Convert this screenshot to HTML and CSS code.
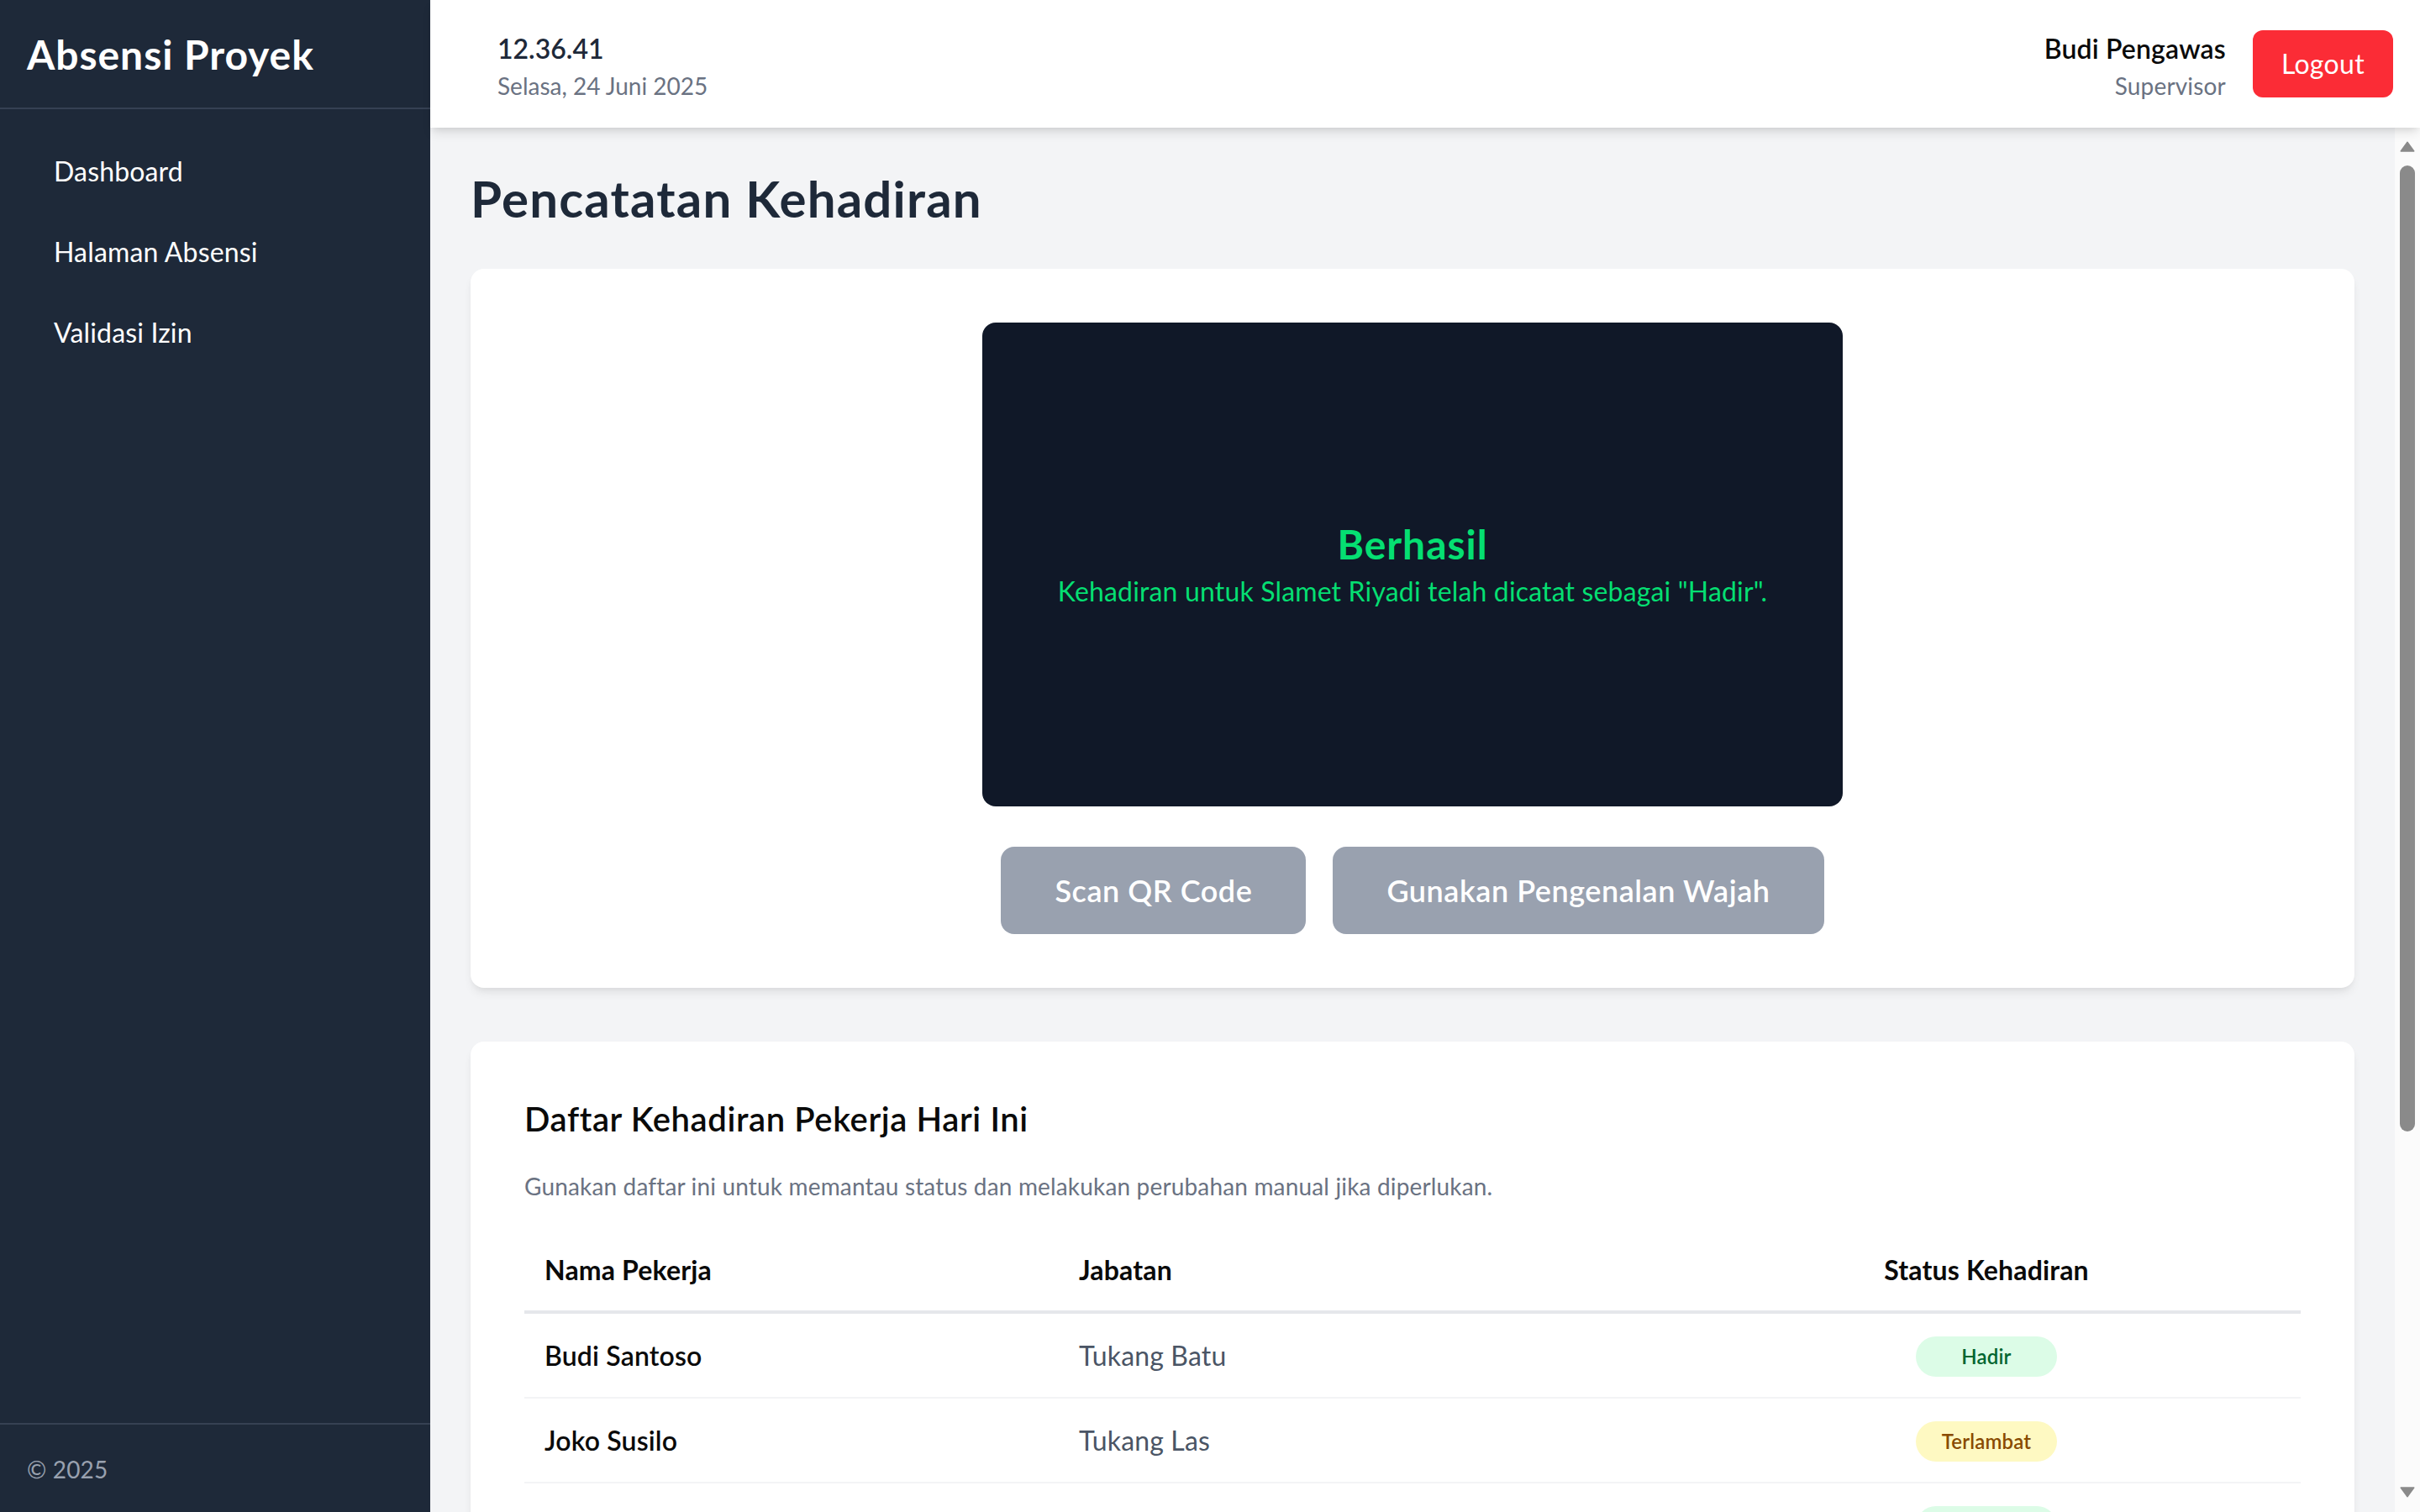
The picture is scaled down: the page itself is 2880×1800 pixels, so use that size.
FILE: index.html
```html
<!DOCTYPE html>
<html lang="id">
<head>
<meta charset="utf-8">
<title>Absensi Proyek</title>
<link rel="stylesheet" href="styles.css">
</head>
<body>
<div class="app">
  <aside class="sidebar">
    <div class="brand">Absensi Proyek</div>
    <nav class="nav">
      <a class="nav-item" href="#">Dashboard</a>
      <a class="nav-item" href="#">Halaman Absensi</a>
      <a class="nav-item" href="#">Validasi Izin</a>
    </nav>
    <div class="side-foot">© 2025</div>
  </aside>
  <div class="content">
    <header class="topbar">
      <div class="clock">
        <div class="time">12.36.41</div>
        <div class="date">Selasa, 24 Juni 2025</div>
      </div>
      <div class="user">
        <div class="user-info">
          <div class="user-name">Budi Pengawas</div>
          <div class="user-role">Supervisor</div>
        </div>
        <button class="logout">Logout</button>
      </div>
    </header>
    <div class="viewport">
      <main class="main">
        <h1 class="page-title">Pencatatan Kehadiran</h1>
        <section class="card scan-card">
          <div class="camera">
            <div class="result-title">Berhasil</div>
            <div class="result-text">Kehadiran untuk Slamet Riyadi telah dicatat sebagai "Hadir".</div>
          </div>
          <div class="scan-actions">
            <button class="btn-scan">Scan QR Code</button>
            <button class="btn-scan">Gunakan Pengenalan Wajah</button>
          </div>
        </section>
        <section class="card list-card">
          <h2 class="list-title">Daftar Kehadiran Pekerja Hari Ini</h2>
          <p class="list-sub">Gunakan daftar ini untuk memantau status dan melakukan perubahan manual jika diperlukan.</p>
          <table class="att-table">
            <colgroup><col class="c-name"><col class="c-role"><col class="c-status"></colgroup>
            <thead>
              <tr><th>Nama Pekerja</th><th>Jabatan</th><th class="th-status">Status Kehadiran</th></tr>
            </thead>
            <tbody>
              <tr><td class="td-name">Budi Santoso</td><td class="td-role">Tukang Batu</td><td class="td-status"><span class="badge badge-hadir">Hadir</span></td></tr>
              <tr><td class="td-name">Joko Susilo</td><td class="td-role">Tukang Las</td><td class="td-status"><span class="badge badge-telat">Terlambat</span></td></tr>
              <tr><td class="td-name">Slamet Riyadi</td><td class="td-role">Mandor</td><td class="td-status"><span class="badge badge-hadir">Hadir</span></td></tr>
              <tr><td class="td-name">Agus Setiawan</td><td class="td-role">Tukang Kayu</td><td class="td-status"><span class="badge badge-hadir">Hadir</span></td></tr>
              <tr><td class="td-name">Rudi Hartono</td><td class="td-role">Kenek</td><td class="td-status"><span class="badge badge-izin">Izin</span></td></tr>
              <tr><td class="td-name">Dedi Kurniawan</td><td class="td-role">Tukang Cat</td><td class="td-status"><span class="badge badge-hadir">Hadir</span></td></tr>
              <tr><td class="td-name">Eko Prasetyo</td><td class="td-role">Operator Alat</td><td class="td-status"><span class="badge badge-alpa">Belum Hadir</span></td></tr>
            </tbody>
          </table>
        </section>
      </main>
      <div class="vscroll" aria-hidden="true">
        <div class="vs-btn vs-up">
          <svg width="18" height="13" viewBox="0 0 18 13"><path d="M9 1.2 L16.8 12 H1.2 Z" fill="#8a8a8a" stroke="#8a8a8a" stroke-width="1.4" stroke-linejoin="round"/></svg>
        </div>
        <div class="vs-thumb"></div>
        <div class="vs-rest"></div>
        <div class="vs-btn vs-down">
          <svg width="18" height="13" viewBox="0 0 18 13"><path d="M1.2 1 H16.8 L9 11.8 Z" fill="#8a8a8a" stroke="#8a8a8a" stroke-width="1.4" stroke-linejoin="round"/></svg>
        </div>
      </div>
    </div>
  </div>
</div>
</body>
</html>
```
FILE: styles.css
```css
* { box-sizing: border-box; }
html, body { margin: 0; height: 100%; }
body {
  font-family: Lato, "Noto Sans", sans-serif;
  letter-spacing: 0.01em;
  color: #101828;
  overflow: hidden;
}
.app { display: flex; height: 100vh; }

/* Sidebar */
.sidebar {
  width: 512px;
  flex: 0 0 512px;
  background: #1e2939;
  color: #fff;
  display: flex;
  flex-direction: column;
}
.brand {
  padding: 33px 32px 31px;
  font-size: 48px;
  line-height: 64px;
  font-weight: 700;
  letter-spacing: 0.02em;
  border-bottom: 2px solid #364153;
}
.nav {
  flex: 1;
  display: flex;
  flex-direction: column;
  padding: 26px 32px;
}
.nav-item {
  display: block;
  padding: 24px 32px;
  font-size: 32px;
  line-height: 48px;
  color: #fff;
  text-decoration: none;
  border-radius: 12px;
}
.side-foot {
  border-top: 2px solid #364153;
  padding: 33px 32px 31px;
  font-size: 28px;
  line-height: 40px;
  color: #99a1af;
}

/* Content column */
.content {
  flex: 1;
  display: flex;
  flex-direction: column;
  min-width: 0;
  height: 100vh;
}
.topbar {
  position: relative;
  z-index: 2;
  flex: 0 0 auto;
  background: #fff;
  display: flex;
  justify-content: space-between;
  align-items: center;
  padding: 34px 32px 30px 80px;
  box-shadow: 0 8px 12px -2px rgba(0,0,0,0.1), 0 4px 8px -4px rgba(0,0,0,0.1);
}
.time {
  font-size: 32px;
  line-height: 48px;
  font-weight: 600;
  letter-spacing: 0;
  color: #1e2939;
}
.date {
  font-size: 28px;
  line-height: 40px;
  letter-spacing: 0;
  color: #6a7282;
}
.user { display: flex; align-items: center; gap: 32px; }
.user-info { text-align: right; }
.user-name {
  font-size: 32px;
  line-height: 48px;
  font-weight: 600;
  color: #0a0a0a;
}
.user-role {
  font-size: 28px;
  line-height: 40px;
  color: #6a7282;
}
.logout {
  align-self: center;
  margin-top: -4px;
  font-family: inherit;
  letter-spacing: 0.01em;
  background: #fb2c36;
  color: #fff;
  border: none;
  border-radius: 12px;
  font-size: 32px;
  line-height: 48px;
  padding: 16px 34px;
}

/* Scrollable area */
.viewport {
  flex: 1;
  min-height: 0;
  display: flex;
}
.main {
  flex: 1;
  min-width: 0;
  overflow: hidden;
  background: #f3f4f6;
  padding: 48px;
}
.vscroll {
  flex: 0 0 30px;
  width: 30px;
  background: #fbfbfb;
  display: flex;
  flex-direction: column;
}
.vs-btn {
  height: 45px;
  flex: 0 0 45px;
  display: flex;
  justify-content: center;
}
.vs-up { padding-top: 16px; }
.vs-down { padding-top: 15px; }
.vs-btn svg { display: block; }
.vs-thumb {
  flex: 0 0 1150px;
  margin: 0 6px;
  background: #8a8a8a;
  border-radius: 9px;
}
.vs-rest { flex: 1; }

.page-title {
  margin: 0 0 48px;
  font-size: 60px;
  line-height: 72px;
  font-weight: 700;
  letter-spacing: 0.02em;
  color: #1e2939;
}
.card {
  background: #fff;
  border-radius: 16px;
  padding: 64px;
  box-shadow: 0 8px 12px -2px rgba(0,0,0,0.07), 0 4px 8px -4px rgba(0,0,0,0.07);
}
.scan-card {
  display: flex;
  flex-direction: column;
  align-items: center;
}
.camera {
  width: 1024px;
  height: 576px;
  background: #101828;
  border-radius: 16px;
  display: flex;
  flex-direction: column;
  align-items: center;
  justify-content: center;
  text-align: center;
  color: #05df72;
}
.result-title {
  font-size: 48px;
  line-height: 64px;
  font-weight: 700;
  letter-spacing: 0.02em;
}
.result-text {
  font-size: 32px;
  line-height: 48px;
}
.scan-actions {
  margin-top: 48px;
  display: flex;
  justify-content: center;
  gap: 32px;
}
.btn-scan {
  font-family: inherit;
  letter-spacing: 0.015em;
  background: #99a1af;
  color: #fff;
  border: none;
  border-radius: 16px;
  font-size: 36px;
  line-height: 56px;
  font-weight: 600;
  padding: 24px 64px;
}

.list-card { margin-top: 64px; }
.list-title {
  margin: 0;
  font-size: 40px;
  line-height: 56px;
  font-weight: 600;
  letter-spacing: 0.015em;
  color: #0a0a0a;
}
.list-sub {
  margin: 32px 0 0;
  font-size: 28px;
  line-height: 40px;
  color: #6a7282;
}
.att-table {
  margin-top: 32px;
  width: 100%;
  border-collapse: collapse;
  table-layout: fixed;
}
.c-name { width: 636px; }
.c-role { width: 730px; }
.att-table th {
  text-align: left;
  padding: 24px;
  font-size: 32px;
  line-height: 48px;
  font-weight: 700;
  color: #0a0a0a;
  border-bottom: 4px solid #e5e7eb;
}
.att-table th.th-status { text-align: center; }
.att-table td {
  padding: 24px;
  font-size: 32px;
  line-height: 48px;
  border-bottom: 2px solid #f3f4f6;
}
.td-name { font-weight: 600; color: #0a0a0a; }
.td-role { color: #4a5565; }
.td-status { text-align: center; }
.badge {
  display: inline-block;
  width: 168px;
  padding: 8px 0;
  border-radius: 9999px;
  font-size: 24px;
  line-height: 32px;
  font-weight: 600;
  text-align: center;
}
.badge-hadir { background: #dcfce7; color: #016630; }
.badge-telat { background: #fef9c2; color: #894b00; }
.badge-izin { background: #dbeafe; color: #193cb8; }
.badge-alpa { background: #ffe2e2; color: #9f0712; }
```
